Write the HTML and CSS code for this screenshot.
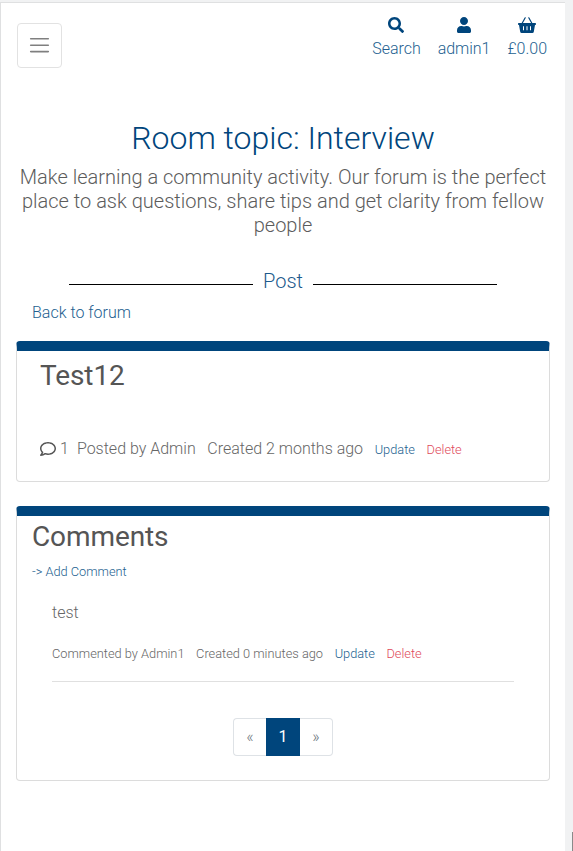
FILE: index.html
```html
<!DOCTYPE html>
<html lang="en">
<head>
<meta charset="utf-8">
<title>Room topic: Interview</title>
<link rel="stylesheet" href="styles.css">
</head>
<body>
<div class="page">
  <header class="topbar">
    <button class="toggler" aria-label="Menu">
      <svg width="30" height="30" viewBox="0 0 30 30"><path stroke="rgba(0,0,0,.5)" stroke-linecap="round" stroke-miterlimit="10" stroke-width="2" d="M4 7h22M4 15h22M4 23h22" transform="translate(2.500 2.200) scale(.8)"/></svg>
    </button>
    <nav class="actions">
      <a href="#"><svg width="16" height="16" viewBox="0 0 512 512"><path d="M505 442.7L405.300 343c-4.500-4.500-10.600-7-17-7H372c27.600-35.300 44-79.700 44-128C416 93.100 322.900 0 208 0S0 93.100 0 208s93.100 208 208 208c48.300 0 92.700-16.400 128-44v16.300c0 6.400 2.500 12.500 7 17l99.700 99.700c9.400 9.400 24.600 9.400 33.900 0l28.300-28.300c9.400-9.400 9.400-24.600.1-34zM208 336c-70.700 0-128-57.200-128-128 0-70.700 57.200-128 128-128 70.700 0 128 57.200 128 128 0 70.700-57.200 128-128 128z"/></svg><span>Search</span></a>
      <a href="#"><svg width="14" height="16" viewBox="0 0 448 512"><path d="M224 256c70.700 0 128-57.300 128-128S294.700 0 224 0 96 57.300 96 128s57.300 128 128 128zm89.600 32h-16.700c-22.200 10.200-46.900 16-72.900 16s-50.600-5.800-72.900-16h-16.700C60.200 288 0 348.200 0 422.400V464c0 26.500 21.500 48 48 48h352c26.500 0 48-21.500 48-48v-41.600c0-74.200-60.200-134.400-134.400-134.400z"/></svg><span>admin1</span></a>
      <a href="#"><svg width="18" height="16" viewBox="0 0 18 16"><path d="M.7 6h16.600q.7 0 .7.700v.6q0 .7-.7.700H17l-1.200 6.800q-.2 1.200-1.400 1.200H3.600q-1.200 0-1.400-1.200L1 8H.7Q0 8 0 7.300v-.6Q0 6 .7 6zM5 9.300v3.900h1V9.300zm3.500 0v3.900h1V9.300zm3.500 0v3.900h1V9.300z"/><path class="handle" d="M7.200.8 4 6.500M10.800.8 14 6.500"/></svg><span>£0.00</span></a>
    </nav>
  </header>

  <section class="intro">
    <h1>Room topic: Interview</h1>
    <p>Make learning a community activity. Our forum is the perfect place to ask questions, share tips and get clarity from fellow people</p>
  </section>

  <div class="divider"><span>Post</span></div>
  <a class="back" href="#">Back to forum</a>

  <main class="cards">
    <article class="card post">
      <h2>Test12</h2>
      <div class="meta">
        <svg class="bubble" width="16" height="16" viewBox="0 0 512 512"><path d="M256 32C114.600 32 0 125.100 0 240c0 47.600 19.900 91.200 52.900 126.300C38 405.700 7 439.100 6.500 439.500c-6.600 7-8.400 17.200-4.600 26S14.400 480 24 480c61.500 0 110-25.700 139.100-46.300C192 442.800 223.200 448 256 448c141.400 0 256-93.100 256-208S397.400 32 256 32zm0 368c-26.700 0-53.100-4.100-78.400-12.100l-22.700-7.200-19.500 13.800c-14.300 10.100-33.900 21.400-57.500 29 7.300-12.100 14.400-25.700 19.900-40.200l10.600-28.100-20.600-21.800C69.700 314.100 48 282.200 48 240c0-88.200 93.300-160 208-160s208 71.800 208 160-93.300 160-208 160z"/></svg>
        <span class="count">1</span>
        <span>Posted by Admin</span>
        <span>Created 2 months ago</span>
        <a class="small" href="#">Update</a>
        <a class="small danger" href="#">Delete</a>
      </div>
    </article>

    <article class="card comments">
      <h2>Comments</h2>
      <a class="add small" href="#">-&gt; Add Comment</a>
      <div class="comment">
        <p>test</p>
        <div class="meta small">
          <span>Commented by Admin1</span>
          <span>Created 0 minutes ago</span>
          <a href="#">Update</a>
          <a class="danger" href="#">Delete</a>
        </div>
      </div>
      <nav class="pagination">
        <span>«</span><span class="active">1</span><span>»</span>
      </nav>
    </article>
  </main>
</div>
<div class="thumb"></div>
</body>
</html>
```
FILE: styles.css
```css
* { box-sizing: border-box; }
html, body { height: 100%; }
body {
  margin: 0;
  display: flex;
  padding-top: 2px;
  background: #f1f2f3;
  font-family: Roboto, "Liberation Sans", sans-serif;
  font-weight: 300;
  font-size: 16px;
  line-height: 24px;
  color: #666;
  overflow: hidden;
}
a { color: #245f90; text-decoration: none; }
h1, h2, p { margin: 0; }
.page {
  width: 565px;
  height: 849px;
  background: #fff;
  border-top: 1px solid #dfe0e1;
  border-left: 1px solid #dfe0e1;
}
.thumb { width: 1px; height: 19px; margin: auto 0 0 auto; background: #8a8a8a; }

.topbar { display: flex; justify-content: space-between; padding: 10px 18px 0 16px; height: 116px; }
.toggler {
  width: 45px;
  height: 45px;
  margin-top: 10px;
  padding: 0;
  display: flex;
  align-items: center;
  justify-content: center;
  background: #fff;
  border: 1px solid #e2e2e2;
  border-radius: 4px;
}
.actions { display: flex; gap: 17px; padding-top: 4px; }
.actions a { display: flex; flex-direction: column; align-items: center; letter-spacing: -.02px; }
.actions svg { fill: #00457c; flex: none; margin-bottom: 4px; }
.handle { fill: none; stroke: #00457c; stroke-width: 1.2; stroke-linecap: round; }

.intro { text-align: center; padding: 0 15px; }
.intro h1 { font-size: 32px; font-weight: 300; line-height: 38px; color: #00457c; margin-bottom: 8px; }
.intro p { font-size: 20px; line-height: 24px; color: #5c5c5c; }

.divider {
  display: flex;
  align-items: center;
  gap: 10px;
  width: 428px;
  margin: 32px 0 0 68px;
  font-size: 20px;
  line-height: 24px;
  color: #1c5a8c;
}
.divider::before, .divider::after { content: ""; flex: 1; height: 1px; margin-top: 7px; background: #000; }
.back { display: block; margin: 8px 0 16px 31px; }

.cards { display: grid; gap: 24px; padding: 0 15px; }
.card { border: 1px solid #dcdcdc; border-top: 10px solid #00457c; border-radius: 4px; }
.card h2 { font-size: 28px; font-weight: 400; line-height: 34px; letter-spacing: -.1px; color: #555; }
.post { height: 141px; padding: 8px 23px 0; }
.comments { height: 275px; padding: 4px 15px 0; }
.meta { display: flex; align-items: baseline; gap: 11.6px; }
.post .meta { margin-top: 44px; }
.bubble { fill: #555; align-self: center; margin: -2px -7.600px 0 0; }
.count { margin-right: -3.600px; }
.small { font-size: 12.8px; }
.danger { color: #e04a5a; }
.add { display: block; margin-top: 6px; }
.comment { margin: 17px 20px 0; padding-bottom: 15px; border-bottom: 1px solid #e0e0e0; }
.comment .meta { margin-top: 17px; }

.pagination { display: flex; justify-content: center; margin-top: 36px; }
.pagination span {
  width: 34px;
  height: 38px;
  line-height: 36px;
  text-align: center;
  border: 1px solid #dee2e6;
  color: #6c757d;
}
.pagination span:first-child { width: 33px; border-right: 0; border-radius: 4px 0 0 4px; }
.pagination span:last-child { width: 33px; border-left: 0; border-radius: 0 4px 4px 0; }
.pagination .active { background: #00457c; border-color: #00457c; color: #fff; font-weight: 400; }
```
